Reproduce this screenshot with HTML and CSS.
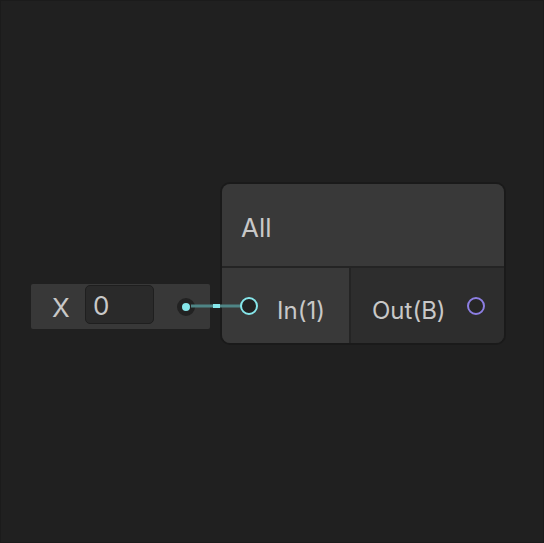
FILE: index.html
```html
<!DOCTYPE html>
<html>
<head>
<meta charset="utf-8">
<link rel="stylesheet" href="styles.css">
</head>
<body>
<div class="canvas">
  <div class="field">
    <span class="field-label">X</span>
    <div class="field-input">0</div>
    <span class="out-dot"></span>
  </div>

  <svg class="edge" width="70" height="10" viewBox="0 0 70 10">
    <line x1="0" y1="5" x2="56" y2="5" stroke="#4f8586" stroke-width="3"/>
    <rect x="22" y="3" width="7" height="4" fill="#86e6ea"/>
  </svg>

  <div class="node">
    <div class="node-title">All</div>
    <div class="node-ports">
      <div class="ports-in">
        <span class="port port-cyan"></span>
        <span class="port-label">In(1)</span>
      </div>
      <div class="ports-out">
        <span class="port-label">Out(B)</span>
        <span class="port port-purple"></span>
      </div>
    </div>
  </div>
</div>
</body>
</html>
```

FILE: styles.css
```css
* { box-sizing: border-box; }
html, body {
  margin: 0;
  padding: 0;
  background: #202020;
}
body {
  width: 544px;
  height: 543px;
  font-family: Inter, "Noto Sans", sans-serif;
  color: #c8c8c8;
}
.canvas {
  position: relative;
  width: 544px;
  height: 543px;
  border: 1px solid #1b1b1b;
  background: #202020;
  overflow: hidden;
}
.field {
  position: absolute;
  left: 30px;
  top: 283px;
  width: 179px;
  height: 45px;
  background: #383838;
  border-radius: 2px;
  display: flex;
  align-items: center;
}
.field-label {
  font-size: 26px;
  width: 54px;
  padding-left: 21px;
  line-height: 1;
  padding-top: 3px;
}
.field-input {
  align-self: flex-start;
  margin-top: 1px;
  width: 69px;
  height: 39px;
  background: #2a2a2a;
  border: 1px solid #1f1f1f;
  border-radius: 5px;
  font-size: 26px;
  line-height: 39px;
  padding-left: 7px;
}
.out-dot {
  margin-left: 23px;
  width: 18px;
  height: 18px;
  border-radius: 50%;
  background: #86e6ea;
  border: 5px solid #222222;
  margin-top: 1px;
}
.edge {
  position: absolute;
  left: 190px;
  top: 300px;
  z-index: 1;
}
.node {
  position: absolute;
  left: 219px;
  top: 181px;
  width: 286px;
  height: 163px;
  border: 2px solid #1a1a1a;
  border-radius: 10px;
  background: #232323;
  display: flex;
  flex-direction: column;
  overflow: hidden;
}
.node-title {
  height: 84px;
  flex: none;
  background: #393939;
  font-size: 26px;
  display: flex;
  align-items: center;
  padding-left: 19px;
  padding-top: 4px;
  border-bottom: 2px solid #242424;
}
.node-ports {
  flex: 1;
  display: flex;
  gap: 2px;
  background: #242424;
}
.ports-in {
  width: 127px;
  background: #393939;
  display: flex;
  align-items: center;
  padding-left: 18px;
  gap: 19px;
}
.ports-out {
  flex: 1;
  background: #2d2d2d;
  display: flex;
  align-items: center;
  padding-left: 21px;
  padding-right: 19px;
  justify-content: space-between;
}
.port-label {
  font-size: 24px;
  line-height: 1;
  padding-top: 10px;
}
.port {
  position: relative;
  z-index: 2;
  width: 18px;
  height: 18px;
  border-radius: 50%;
  border: 2px solid;
  flex: none;
}
.port-cyan {
  border-color: #86e6ea;
  background: #222222;
}
.port-purple {
  border-color: #8c7ee2;
  background: #262626;
}
```
